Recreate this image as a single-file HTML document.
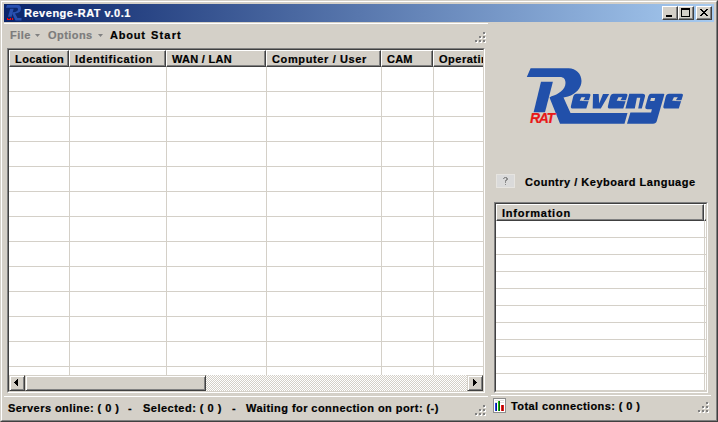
<!DOCTYPE html>
<html><head><meta charset="utf-8">
<style>
*{margin:0;padding:0;box-sizing:border-box}
html,body{width:718px;height:422px;overflow:hidden;background:#D4D0C8}
body{position:relative;font-family:"Liberation Sans",sans-serif;font-weight:bold;font-size:11px;color:#000}
.a{position:absolute}
.t{position:absolute;white-space:nowrap;line-height:13px;-webkit-text-stroke:0.2px currentColor}
.hl{position:absolute;height:1px;background:#fff}
.grip i{position:absolute;width:2px;height:2px;background:#808080;box-shadow:1px 1px 0 #fff}
.hdr{position:absolute;top:0;height:17px;background:#D4D0C8;border-top:1px solid #fff;border-left:1px solid #fff;border-bottom:1px solid #404040;border-right:1px solid #404040;box-shadow:inset -1px -1px 0 #808080}
.hdr span{position:absolute;top:2px;white-space:nowrap;line-height:13px;-webkit-text-stroke:0.2px currentColor}
.btn{position:absolute;width:16px;height:14px;background:#D4D0C8;border-top:1px solid #fff;border-left:1px solid #fff;border-right:1px solid #404040;border-bottom:1px solid #404040;box-shadow:inset -1px -1px 0 #808080}
.gh{position:absolute;left:0;height:1px;background:#D4D0C8}
.gv{position:absolute;top:0;width:1px;background:#D4D0C8}
.sb{position:absolute;width:16px;height:16px;background:#D4D0C8;border-top:1px solid #D4D0C8;border-left:1px solid #D4D0C8;border-right:1px solid #404040;border-bottom:1px solid #404040;box-shadow:inset 1px 1px 0 #fff,inset -1px -1px 0 #808080}
</style></head><body>
<!-- window frame -->
<div class="a" style="left:0;top:0;width:718px;height:422px;border-top:1px solid #D4D0C8;border-left:1px solid #D4D0C8;border-right:1px solid #404040;border-bottom:1px solid #404040"></div>
<div class="a" style="left:1px;top:1px;width:716px;height:420px;border-top:1px solid #fff;border-left:1px solid #fff;border-right:1px solid #808080;border-bottom:1px solid #808080"></div>

<!-- title bar -->
<div class="a" style="left:4px;top:4px;width:710px;height:18px;background:linear-gradient(to right,#0A246A,#A6CAF0)"></div>
<svg class="a" style="left:4px;top:4px" width="18" height="18" viewBox="4 4 18 18">
 <g fill="#2850B0">
  <path d="M7,5 H18 Q21,5 21,8.5 Q21,12 17.5,13 L15,13.5 L17.5,18 H21.5 V20.5 H15.5 L12.2,13.6 L13,12.3 Q18,11.8 18,9.2 Q18,7.8 16.5,7.8 H6 Z"/>
  <path d="M10.2,8.8 H13.6 L11.6,16.8 H8 Z"/>
 </g>
 <rect x="7" y="18" width="1" height="2" fill="#f00"/><rect x="7" y="19" width="4" height="1" fill="#f00"/><rect x="10" y="18" width="1" height="2" fill="#f00"/><rect x="12" y="18" width="1" height="2" fill="#f00"/>
</svg>
<div class="t" style="left:24px;top:7px;color:#fff;letter-spacing:0.52px">Revenge-RAT v.0.1</div>
<div class="btn" style="left:662px;top:6px"><i class="a" style="left:3px;top:8px;width:6px;height:2px;background:#000"></i></div>
<div class="btn" style="left:678px;top:6px"><i class="a" style="left:2px;top:1px;width:9px;height:9px;border:1px solid #000;border-top-width:2px"></i></div>
<div class="btn" style="left:696px;top:6px"><svg class="a" style="left:3px;top:2px" width="8" height="7" shape-rendering="crispEdges"><path d="M0,0h2v1h-2zM6,0h2v1h-2zM1,1h2v1h-2zM5,1h2v1h-2zM2,2h4v1h-4zM3,3h2v1h-2zM2,4h4v1h-4zM1,5h2v1h-2zM5,5h2v1h-2zM0,6h2v1h-2zM6,6h2v1h-2z" fill="#000"/></svg></div>

<!-- left toolstrip -->
<div class="hl" style="left:4px;top:23px;width:484px"></div>
<div class="t" style="left:10px;top:29px;color:#7C7C7C;letter-spacing:0.45px">File</div>
<svg class="a" style="left:35px;top:34px" width="5" height="3"><path d="M0,0h5l-2.5,3z" fill="#808080"/></svg>
<div class="t" style="left:48px;top:29px;color:#7C7C7C;letter-spacing:0.44px">Options</div>
<svg class="a" style="left:98px;top:34px" width="5" height="3"><path d="M0,0h5l-2.5,3z" fill="#808080"/></svg>
<div class="t" style="left:110px;top:29px;letter-spacing:0.80px">About</div>
<div class="t" style="left:151px;top:29px;letter-spacing:1.18px">Start</div>
<div class="grip"><i style="left:483px;top:32px"></i><i style="left:479px;top:36px"></i><i style="left:483px;top:36px"></i><i style="left:475px;top:40px"></i><i style="left:479px;top:40px"></i><i style="left:483px;top:40px"></i></div>

<!-- left list -->
<div class="a" style="left:7px;top:48px;width:478px;height:345px;border-top:1px solid #808080;border-left:1px solid #808080;border-right:1px solid #fff;border-bottom:1px solid #fff"></div>
<div class="a" style="left:8px;top:49px;width:476px;height:343px;border-top:1px solid #404040;border-left:1px solid #404040;border-right:1px solid #D4D0C8;border-bottom:1px solid #D4D0C8;background:#fff;overflow:hidden">
 <div class="gh" style="top:41px;width:474px"></div>
 <div class="gh" style="top:66px;width:474px"></div>
 <div class="gh" style="top:91px;width:474px"></div>
 <div class="gh" style="top:116px;width:474px"></div>
 <div class="gh" style="top:141px;width:474px"></div>
 <div class="gh" style="top:166px;width:474px"></div>
 <div class="gh" style="top:191px;width:474px"></div>
 <div class="gh" style="top:216px;width:474px"></div>
 <div class="gh" style="top:241px;width:474px"></div>
 <div class="gh" style="top:266px;width:474px"></div>
 <div class="gh" style="top:291px;width:474px"></div>
 <div class="gh" style="top:316px;width:474px"></div>
 <div class="gv" style="left:60px;height:341px"></div>
 <div class="gv" style="left:157px;height:341px"></div>
 <div class="gv" style="left:257px;height:341px"></div>
 <div class="gv" style="left:372px;height:341px"></div>
 <div class="gv" style="left:424px;height:341px"></div>
 <div class="hdr" style="left:0;width:60px"><span style="left:5px;letter-spacing:0.43px">Location</span></div>
 <div class="hdr" style="left:60px;width:97px"><span style="left:5px;letter-spacing:0.70px">Identification</span></div>
 <div class="hdr" style="left:157px;width:100px"><span style="left:5px;letter-spacing:0.27px">WAN / LAN</span></div>
 <div class="hdr" style="left:257px;width:115px"><span style="left:5px;letter-spacing:0.63px">Computer / User</span></div>
 <div class="hdr" style="left:372px;width:52px"><span style="left:5px;letter-spacing:0.2px">CAM</span></div>
 <div class="hdr" style="left:424px;width:120px"><span style="left:5px;letter-spacing:0.5px">Operating System</span></div>
 <!-- h scrollbar -->
 <div class="a" style="left:0;top:325px;width:474px;height:16px;background-color:#fff;background-image:linear-gradient(45deg,#D4D0C8 25%,transparent 25%,transparent 75%,#D4D0C8 75%),linear-gradient(45deg,#D4D0C8 25%,transparent 25%,transparent 75%,#D4D0C8 75%);background-size:2px 2px;background-position:0 0,1px 1px"></div>
 <div class="sb" style="left:0;top:325px"><svg class="a" style="left:4px;top:3px" width="4" height="7" shape-rendering="crispEdges"><path d="M3,0h1v7h-1v-1h-1v-1h-1v-1h-1v-1h1v-1h1v-1h1z" fill="#000"/></svg></div>
 <div class="sb" style="left:16px;top:325px;width:181px"></div>
 <div class="sb" style="left:458px;top:325px"><svg class="a" style="left:5px;top:3px" width="4" height="7" shape-rendering="crispEdges"><path d="M0,0h1v1h1v1h1v1h1v1h-1v1h-1v1h-1v1h-1z" fill="#000"/></svg></div>
</div>

<!-- left status -->
<div class="hl" style="left:4px;top:396px;width:484px"></div>
<div class="t" style="left:8px;top:402px;letter-spacing:0.44px">Servers online: ( 0 )</div>
<div class="t" style="left:128px;top:402px">-</div>
<div class="t" style="left:143px;top:402px;letter-spacing:0.49px">Selected: ( 0 )</div>
<div class="t" style="left:232px;top:402px">-</div>
<div class="t" style="left:246px;top:402px;letter-spacing:0.44px">Waiting for connection on port: (-)</div>
<div class="grip"><i style="left:483px;top:405px"></i><i style="left:479px;top:409px"></i><i style="left:483px;top:409px"></i><i style="left:475px;top:413px"></i><i style="left:479px;top:413px"></i><i style="left:483px;top:413px"></i></div>

<!-- right panel: logo -->
<svg class="a" style="left:520px;top:60px" width="170" height="70" viewBox="520 60 170 70">
 <g fill="#2150AA">
  <path d="M530.6,68.3 L568.5,68.3 C576,68.3 581.5,74 581.5,81 C581.5,88 576,94 568,96.5 L563.5,97.5 L570.5,113 L627.5,113 L624.5,123.7 L560,123.7 L549.5,97.5 L551.5,96.2 C558,94.5 565.5,90 565.5,83 C565.5,79 563.5,77 560,77 L526.8,77 Z"/>
  <path d="M541,81.8 L552.9,81.8 L545,112.2 L533.6,112.2 Z"/>
  <path fill-rule="evenodd" d="M576.6,93.7 L589.2,93.7 Q590.9,93.7 590.4,95.5 L586.3,108.5 L573,108.5 Q570.4,108.5 570.9,106.2 L573.1,97 Q574,93.7 576.6,93.7 Z M581.4,97.2 L585.3,97.2 L583,100.8 L579.7,100.8 Z"/>
  <path d="M593,94 L598.7,94 L599.2,103.5 L603,94 L609.2,94 L600.8,108.5 L592.7,108.5 Z"/>
  <path fill-rule="evenodd" transform="translate(37,0)" d="M576.6,93.7 L589.2,93.7 Q590.9,93.7 590.4,95.5 L586.3,108.5 L573,108.5 Q570.4,108.5 570.9,106.2 L573.1,97 Q574,93.7 576.6,93.7 Z M581.4,97.2 L585.3,97.2 L583,100.8 L579.7,100.8 Z"/>
  <path d="M629.3,93.7 L642.5,93.7 Q645.5,93.7 645,96.5 L641.8,108.5 L638.2,108.5 L640.3,97.8 L636.9,97.8 L634.8,108.5 L625.4,108.5 Z"/>
  <path fill-rule="evenodd" d="M650.8,93.8 L663.5,93.8 Q664.6,93.8 664.3,94.8 L656.8,121 Q656,123.7 653,123.7 L627,123.7 L630.4,112.6 L651.1,112.6 L651.9,109.2 L647.6,109.2 Q644.7,109.2 645.4,106.6 L648.2,96.4 Q648.9,93.8 650.8,93.8 Z M651,97.9 L655.2,97.9 L654.4,100.9 L650.2,100.9 Z"/>
  <path fill-rule="evenodd" transform="translate(92.5,0)" d="M576.6,93.7 L589.2,93.7 Q590.9,93.7 590.4,95.5 L586.3,108.5 L573,108.5 Q570.4,108.5 570.9,106.2 L573.1,97 Q574,93.7 576.6,93.7 Z M581.4,97.2 L585.3,97.2 L583,100.8 L579.7,100.8 Z"/>
 </g>
 <g fill="#D4D0C8">
  <path d="M582.2,100.2 L589.5,100.2 L589.3,101.2 L582.2,101 Z"/>
  <path transform="translate(37,0)" d="M582.2,100.2 L589.5,100.2 L589.3,101.2 L582.2,101 Z"/>
  <path transform="translate(92.5,0)" d="M582.2,100.2 L589.5,100.2 L589.3,101.2 L582.2,101 Z"/>
 </g>
</svg>
<div class="t" style="left:530px;top:110px;font:bold italic 14px 'Liberation Sans';line-height:16px;color:#E81818;letter-spacing:-1.3px;-webkit-text-stroke:0.2px #E81818">RAT</div>

<!-- flag placeholder -->
<div class="a" style="left:496px;top:174px;width:19px;height:14px;background:#DADADA;border:1px solid #E6E4E0"></div>
<svg class="a" style="left:503px;top:177px" width="5" height="8" shape-rendering="crispEdges"><path d="M1,0h3v1h-3zM0,1h1v1h-1zM3,1h2v2h-2zM2,3h2v1h-2zM2,4h1v2h-1zM2,7h1v1h-1z" fill="#8C8C8C"/><path d="M1,1h1v1h-1z" fill="#B4B4B4"/></svg>
<div class="t" style="left:525px;top:176px;letter-spacing:0.50px">Country / Keyboard Language</div>

<!-- right list -->
<div class="a" style="left:494px;top:202px;width:214px;height:191px;border-top:1px solid #808080;border-left:1px solid #808080;border-right:1px solid #fff;border-bottom:1px solid #fff"></div>
<div class="a" style="left:495px;top:203px;width:212px;height:189px;border-top:1px solid #404040;border-left:1px solid #404040;border-right:1px solid #D4D0C8;border-bottom:1px solid #D4D0C8;background:#fff;overflow:hidden">
 <div class="gh" style="top:33px;width:210px"></div>
 <div class="gh" style="top:50px;width:210px"></div>
 <div class="gh" style="top:67px;width:210px"></div>
 <div class="gh" style="top:84px;width:210px"></div>
 <div class="gh" style="top:101px;width:210px"></div>
 <div class="gh" style="top:118px;width:210px"></div>
 <div class="gh" style="top:135px;width:210px"></div>
 <div class="gh" style="top:152px;width:210px"></div>
 <div class="gh" style="top:169px;width:210px"></div>
 <div class="gh" style="top:186px;width:210px"></div>
 <div class="gv" style="left:208px;height:187px"></div>
 <div class="hdr" style="left:0;width:208px"><span style="left:5px;letter-spacing:0.76px">Information</span></div>
 <div class="a" style="left:208px;top:0;width:2px;height:17px;background:#D4D0C8;border-left:1px solid #fff;border-top:1px solid #fff;border-bottom:1px solid #404040;box-shadow:inset 0 -1px 0 #808080"></div>
</div>

<!-- right status -->
<div class="hl" style="left:491px;top:395px;width:220px"></div>
<svg class="a" style="left:493px;top:398px" width="13" height="15">
 <rect x="0.5" y="0.5" width="12" height="14" fill="#fff" stroke="#8C8C8C"/>
 <rect x="2" y="2" width="9" height="1" fill="#E0E0E0"/><rect x="2" y="4" width="9" height="1" fill="#E0E0E0"/>
 <rect x="2" y="5" width="1" height="8" fill="#2040F0"/><rect x="3" y="5" width="1" height="8" fill="#101880"/>
 <rect x="5" y="3" width="1" height="10" fill="#10C010"/><rect x="6" y="3" width="1" height="10" fill="#105010"/>
 <rect x="8" y="7" width="1" height="6" fill="#F01818"/><rect x="9" y="7" width="1" height="6" fill="#901010"/><rect x="10" y="7" width="1" height="6" fill="#F01818"/>
</svg>
<div class="t" style="left:511px;top:400px;letter-spacing:0.41px">Total connections: ( 0 )</div>
<div class="grip"><i style="left:706px;top:402px"></i><i style="left:702px;top:406px"></i><i style="left:706px;top:406px"></i><i style="left:698px;top:410px"></i><i style="left:702px;top:410px"></i><i style="left:706px;top:410px"></i></div>
</body></html>
